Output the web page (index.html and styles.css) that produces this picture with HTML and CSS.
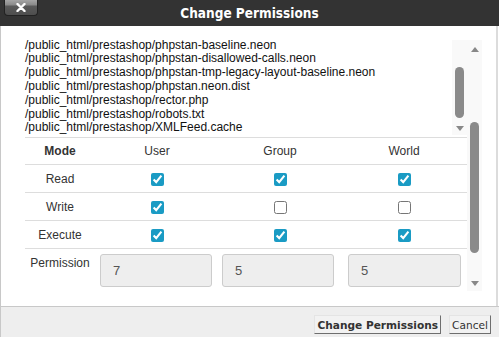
FILE: index.html
```html
<!DOCTYPE html>
<html lang="en">
<head>
<meta charset="UTF-8">
<meta name="viewport" content="width=device-width, initial-scale=1.0">
<title>Change Permissions</title>
<link rel="stylesheet" href="styles.css">
</head>
<body>
<div class="dialog">
    <div class="titlebar">
        <button class="close-btn" type="button">
            <svg width="10" height="9" viewBox="0 0 10 9"><path d="M1.5 1 L8.5 8 M8.5 1 L1.5 8" stroke="#fff" stroke-width="2.4" stroke-linecap="round"/></svg>
        </button>
        <div class="title">Change Permissions</div>
    </div>

    <div class="content">
        <div class="main">
            <div class="file-list">
                <div class="files">
                    <div>/public_html/prestashop/phpstan-baseline.neon</div>
                    <div>/public_html/prestashop/phpstan-disallowed-calls.neon</div>
                    <div>/public_html/prestashop/phpstan-tmp-legacy-layout-baseline.neon</div>
                    <div>/public_html/prestashop/phpstan.neon.dist</div>
                    <div>/public_html/prestashop/rector.php</div>
                    <div>/public_html/prestashop/robots.txt</div>
                    <div>/public_html/prestashop/XMLFeed.cache</div>
                </div>
                <div class="scrollbar inner-bar">
                    <div class="thumb"></div>
                    <div class="arrow-down"></div>
                </div>
            </div>

            <div class="perm-table">
                <div class="row head">
                    <div class="bold">Mode</div>
                    <div>User</div>
                    <div>Group</div>
                    <div>World</div>
                </div>
                <div class="row">
                    <div>Read</div>
                    <div><input type="checkbox" checked></div>
                    <div><input type="checkbox" checked></div>
                    <div><input type="checkbox" checked></div>
                </div>
                <div class="row">
                    <div>Write</div>
                    <div><input type="checkbox" checked></div>
                    <div><input type="checkbox"></div>
                    <div><input type="checkbox"></div>
                </div>
                <div class="row">
                    <div>Execute</div>
                    <div><input type="checkbox" checked></div>
                    <div><input type="checkbox" checked></div>
                    <div><input type="checkbox" checked></div>
                </div>
            </div>

            <div class="perm-row">
                <div class="perm-label">Permission</div>
                <input type="text" class="perm-input" value="7" readonly>
                <input type="text" class="perm-input" value="5" readonly>
                <input type="text" class="perm-input last" value="5" readonly>
            </div>
        </div>

        <div class="scrollbar outer-bar">
            <div class="arrow-up"></div>
            <div class="thumb"></div>
            <div class="arrow-down"></div>
        </div>
    </div>

    <div class="footer">
        <button class="btn bold-btn" type="button">Change Permissions</button>
        <button class="btn" type="button">Cancel</button>
    </div>
</div>
</body>
</html>
```

FILE: styles.css
```css
body {
    margin: 0;
    font-family: "Liberation Sans", Arial, sans-serif;
    background-color: #fff;
}

.dialog {
    width: 499px;
    height: 337px;
    display: flex;
    flex-direction: column;
    overflow: hidden;
}

/* title bar */
.titlebar {
    height: 26px;
    background-color: #333;
    display: grid;
    grid-template-columns: 1fr auto 1fr;
    align-items: center;
}

.close-btn {
    justify-self: start;
    align-self: start;
    margin-left: 4px;
    width: 34px;
    height: 16px;
    padding: 0;
    border: 1px solid #222;
    border-top: none;
    border-radius: 0 0 4px 4px;
    background: linear-gradient(#a5a5a5 0, #8a8a8a 5px, #5a5a5a 6px, #4e4e4e 100%);
    display: flex;
    align-items: center;
    justify-content: center;
}

.title {
    color: #fff;
    font-family: "DejaVu Sans Condensed", "DejaVu Sans", sans-serif;
    font-weight: bold;
    font-size: 13.5px;
}

/* content */
.content {
    height: 280px;
    border-left: 1px solid #c8c8c8;
    border-right: 2px solid #dcdcdc;
    margin-right: 1px;
    padding: 11px 0 0 24px;
    display: flex;
    box-sizing: border-box;
}

.main {
    width: 442px;
    color: #222;
}

.file-list {
    height: 100px;
    border-bottom: 1px solid #ddd;
    display: flex;
}

.files {
    flex: 1;
    font-size: 12px;
    line-height: 13.83px;
    padding-top: 1.5px;
    color: #111;
    white-space: nowrap;
}

/* scrollbars */
.scrollbar {
    width: 15px;
    background-color: #f9f9f9;
    display: flex;
    flex-direction: column;
    align-items: center;
}

.inner-bar {
    margin-top: 3px;
    height: 95px;
}

.inner-bar .thumb {
    margin-top: 27px;
    height: 51px;
}

.inner-bar .arrow-down {
    margin-top: 8px;
}

.outer-bar {
    margin-top: 3px;
    height: 251px;
}

.outer-bar .arrow-up {
    margin-top: 7px;
}

.outer-bar .thumb {
    margin-top: 70px;
    height: 131px;
}

.outer-bar .arrow-down {
    margin-top: 28px;
}

.thumb {
    width: 9px;
    background-color: #8a8a8a;
    border-radius: 5px;
}

.arrow-up,
.arrow-down {
    width: 0;
    height: 0;
    border-left: 4px solid transparent;
    border-right: 4px solid transparent;
}

.arrow-up {
    border-bottom: 5px solid #888;
}

.arrow-down {
    border-top: 5px solid #888;
}

/* permissions table */
.row {
    display: grid;
    grid-template-columns: 70px 124px 122px 1fr;
    height: 27px;
    border-bottom: 1px solid #ddd;
    align-items: center;
    text-align: center;
    font-size: 12px;
    color: #333;
}

.row.head {
    height: 26px;
}

.bold {
    font-weight: bold;
}

.row input {
    margin: 0;
    width: 13px;
    height: 13px;
    vertical-align: middle;
    accent-color: #1a9bc4;
}

.perm-row {
    display: flex;
    padding-top: 5px;
}

.perm-label {
    width: 70px;
    text-align: center;
    font-size: 12px;
    color: #333;
    padding-top: 2px;
}

.perm-input {
    width: 112px;
    height: 33px;
    box-sizing: border-box;
    margin-left: 5px;
    padding: 0 0 0 12px;
    border: 1px solid #ccc;
    border-radius: 3px;
    background-color: #eee;
    font-family: "Liberation Sans", Arial, sans-serif;
    font-size: 13px;
    color: #555;
}

.perm-input + .perm-input {
    margin-left: 10px;
}

.perm-input.last {
    margin-left: 14px;
    width: 113px;
}

/* footer */
.footer {
    height: 31px;
    box-sizing: border-box;
    border-top: 1px solid #c8c8c8;
    border-left: 1px solid #c8c8c8;
    background-color: #eee;
    display: flex;
    justify-content: flex-end;
    align-items: flex-start;
    padding: 8px 8px 0 0;
    gap: 8px;
}

.btn {
    height: 19px;
    padding: 0 2px;
    font-family: "DejaVu Sans", Verdana, sans-serif;
    font-size: 10.6px;
    color: #333;
    background-color: #f2f2f2;
    border: 1px solid;
    border-color: #e4e4e4 #6e6e6e #6e6e6e #e4e4e4;
    cursor: pointer;
}

.bold-btn {
    font-weight: bold;
}
```
